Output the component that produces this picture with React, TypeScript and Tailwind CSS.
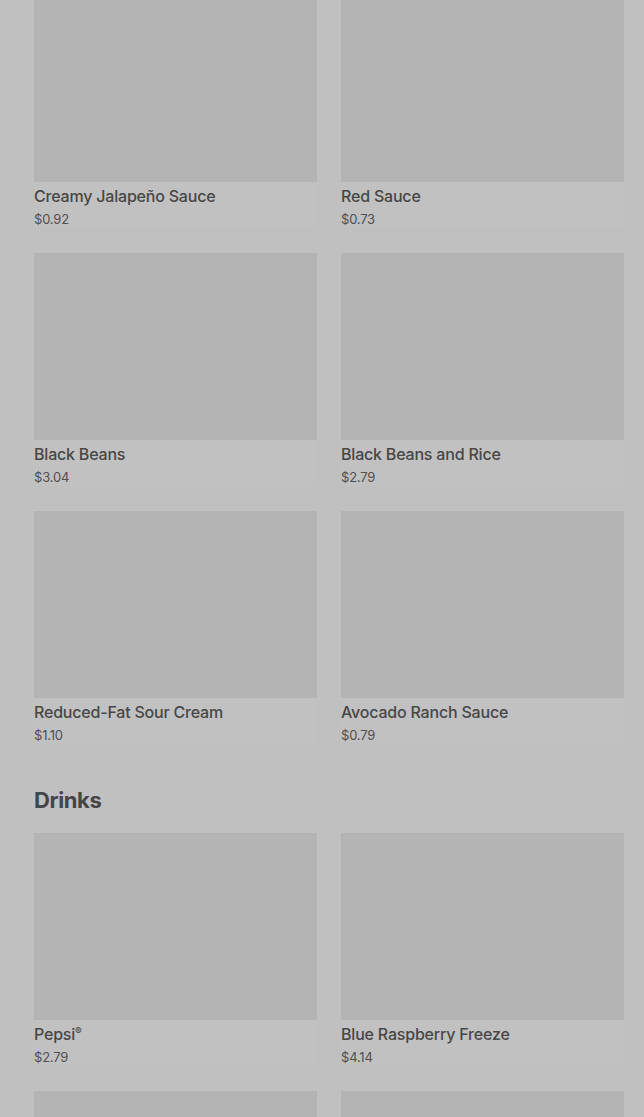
import React from "react";

type Item = { name: React.ReactNode; price: string };

const sides: Item[] = [
  { name: "Creamy Jalapeño Sauce", price: "$0.92" },
  { name: "Red Sauce", price: "$0.73" },
  { name: "Black Beans", price: "$3.04" },
  { name: "Black Beans and Rice", price: "$2.79" },
  { name: "Reduced-Fat Sour Cream", price: "$1.10" },
  { name: "Avocado Ranch Sauce", price: "$0.79" },
];

const drinks: Item[] = [
  {
    name: (
      <>
        Pepsi<sup className="text-[10px]">®</sup>
      </>
    ),
    price: "$2.79",
  },
  { name: "Blue Raspberry Freeze", price: "$4.14" },
];

function Card({ item }: { item: Item }) {
  return (
    <div className="bg-[#c1c1c1]">
      <div className="h-[187px] bg-[#b4b4b4]" />
      <div className="pt-[4px]">
        <div className="text-[16px] leading-[20px] font-medium tracking-[-0.2px] text-[#474747]">{item.name}</div>
        <div className="mt-[4px] text-[13px] leading-[18px] tracking-[-0.2px] text-[#505050]">{item.price}</div>
      </div>
    </div>
  );
}

export default function App() {
  return (
    <div
      className="w-[644px] h-[1117px] overflow-hidden bg-[#c0c0c0]"
      style={{ fontFamily: "Inter, Roboto, 'Liberation Sans', sans-serif" }}
    >
      <div className="-mt-[5px] pl-[34px] pr-[20px]">
        <div className="grid grid-cols-2 gap-x-[24px] gap-y-[25px]">
          {sides.map((it, i) => (
            <Card key={i} item={it} />
          ))}
        </div>
        <h2 className="mt-[42px] mb-[19px] text-[22px] leading-[28px] font-bold tracking-[-0.4px] text-[#454545]">Drinks</h2>
        <div className="grid grid-cols-2 gap-x-[24px] gap-y-[25px]">
          {drinks.map((it, i) => (
            <Card key={i} item={it} />
          ))}
          <div className="h-[187px] bg-[#b4b4b4]" />
          <div className="h-[187px] bg-[#b4b4b4]" />
        </div>
      </div>
    </div>
  );
}
